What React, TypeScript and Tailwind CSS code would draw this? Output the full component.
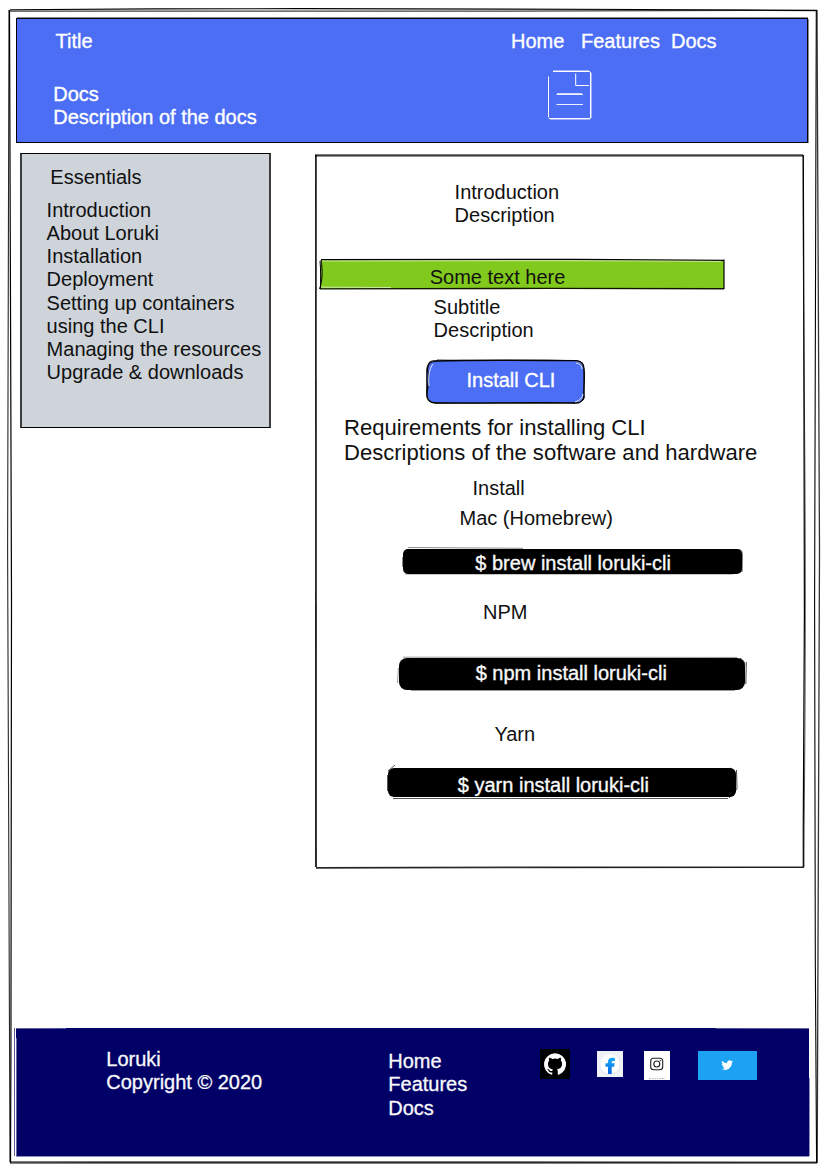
import type { ReactNode } from 'react'

type Stroke = { d: string; o?: number; w?: number; c?: string }

/* Hand-drawn outline laid over its panel; coordinates are local to the panel. */
function Sketch({ strokes }: { strokes: Stroke[] }) {
  return (
    <svg className="pointer-events-none absolute left-0 top-0 h-full w-full overflow-visible" fill="none">
      {strokes.map((s, i) => (
        <path key={i} d={s.d} stroke={s.c ?? '#000'} strokeWidth={s.w ?? 1} opacity={s.o ?? 1} />
      ))}
    </svg>
  )
}

function Command({ className, strokes, children }: { className: string; strokes: Stroke[]; children: ReactNode }) {
  return (
    <div className={`relative bg-black text-[#f8f9fa] [-webkit-text-stroke:0.35px_#f8f9fa] ${className}`}>
      <Sketch strokes={strokes} />
      <span className="relative block">{children}</span>
    </div>
  )
}

const essentials = [
  'Introduction',
  'About Loruki',
  'Installation',
  'Deployment',
  'Setting up containers',
  'using the CLI',
  'Managing the resources',
  'Upgrade & downloads',
]

export default function App() {
  return (
    <div className="relative flex h-[1172px] w-[827px] flex-col overflow-hidden whitespace-nowrap bg-white font-['Liberation_Sans',Arial,sans-serif] text-[20px] leading-[23px] text-[#111]">
      <Sketch
        strokes={[
          { d: 'M10 9.7C110 9 200 8.6 300 8.6S640 9.2 817 10.4', w: 1.1 },
          { d: 'M9 11.2C110 11.6 300 11.6 500 11.1S720 10.2 817 10.6', w: 1.2, o: 0.75 },
          { d: 'M816.3 10C815.5 120 814.7 300 814.6 600S815.3 950 816.6 1163', w: 1.1 },
          { d: 'M817 10C818.5 100 819.6 300 819.5 550S818 1000 817.2 1163', w: 1.3, o: 0.8 },
          { d: 'M10 1163C300 1162.4 600 1163.3 817 1162.8', w: 1.2 },
          { d: 'M10 1161.8C250 1162 500 1160.8 817 1162', w: 1.2, o: 0.7 },
          { d: 'M9 10C7.7 120 7.4 300 7.6 550S8.6 1000 10 1162', w: 1.1, o: 0.85 },
          { d: 'M9.5 10C10.8 120 11.6 300 11.5 600S11.2 1000 10.5 1163', w: 1.2 },
        ]}
      />

      <header className="relative ml-4 mt-[18px] flex h-[125px] w-[792px] border border-black bg-[#4c6ef5] text-white [-webkit-text-stroke:0.35px_#fff]">
        <Sketch
          strokes={[
            { d: 'M0 -1.5H791', o: 0.45 },
            { d: 'M791.5 0V124', o: 0.45 },
          ]}
        />
        <div className="w-[494px] pt-[11px]">
          <div className="pl-[38.5px]">Title</div>
          <div className="mt-[30px] pl-[36.3px]">
            <div>Docs</div>
            <div>Description of the docs</div>
          </div>
        </div>
        <div className="pt-[11px]">
          <nav className="flex">
            <a className="w-[70px]">Home</a>
            <a className="w-[90px]">Features</a>
            <a>Docs</a>
          </nav>
          <svg className="ml-[36px] mt-[16px]" width="46" height="52" fill="none" stroke="#fff">
            <path d="M6 2.5H43M1.5 7.5V48.5M2 49.5H43.5M43.5 3V49" />
            <path d="M6 1.5H42M3 50.5H43M44.5 4V49" opacity=".45" />
            <path d="M28.7 4.5V16.5H42" />
            <path d="M9.5 25.5H36M9.5 35.5H36M10 24.7H35" strokeWidth=".9" />
          </svg>
        </div>
      </header>

      <div className="mt-[10px] flex h-[875px] items-start">
        <aside className="h-[275px] w-[251px] ml-5 border-x-2 border-y border-x-[#3a3c3e] border-y-black bg-[#ced4da] pt-3">
          <h2 className="pl-[28.3px]">Essentials</h2>
          <ul className="mt-[10px] pl-[24.6px] leading-[23.15px]">
            {essentials.map((item) => (
              <li key={item}>{item}</li>
            ))}
          </ul>
        </aside>

        <main className="relative ml-11 mt-px h-[714px] w-[490px] pt-[27px]">
          <Sketch
            strokes={[
              { d: 'M0 .8C120 .3 300 .6 488 .8', w: 1.2, o: 0.7 },
              { d: 'M0 1.8C160 2 320 1.2 488 1.8', w: 1.2, o: 0.85 },
              { d: 'M.7 1C0 180 -.5 400 .6 713', w: 1.2, o: 0.75 },
              { d: 'M1 1C2.4 180 3 400 1.2 713', w: 1.2, o: 0.95 },
              { d: 'M488.3 1C488.5 150 490 280 489.4 460S488 650 488.3 713', w: 1.2 },
              { d: 'M488 1C488 150 490.3 280 490.3 440S489 650 489 713', w: 1, o: 0.65 },
              { d: 'M1 713.6C160 713.2 330 712.7 489 713.1', w: 1.2, o: 0.8 },
              { d: 'M1 714.3C160 713.2 330 713.9 489 713.5', w: 1.1, o: 0.7 },
            ]}
          />
          <div className="ml-[139.6px]">
            <h1>Introduction</h1>
            <p>Description</p>
          </div>
          <div className="relative ml-[6px] mt-[33px] h-[29px] w-[403px] bg-[#82c91e] pl-[108.7px] pt-[6px]">
            <Sketch
              strokes={[
                { d: 'M0 -.3C120 -1.2 270 -1 403 .3', w: 1.2 },
                { d: 'M403 -.5V29', w: 1.2 },
                { d: 'M-1 28.9C130 28.3 270 28.2 403 28.8', w: 1.4, o: 0.9 },
                { d: 'M0 0C1.7 10 1.7 20-1.5 29M-1 1C0 10-.5 20-.5 29', w: 1 },
                { d: 'M1 1C100 1 250 .2 400 1.4M0 27.2L70 27.5', c: '#fff', o: 0.6 },
              ]}
            />
            <span className="relative">Some text here</span>
          </div>
          <div className="ml-[118.6px] mt-[7px]">
            <h2>Subtitle</h2>
            <p>Description</p>
          </div>
          <button className="relative ml-[112px] mt-[19px] block h-[42px] w-[157px] rounded-[9px] bg-[#4c6ef5] pb-[11px] pl-[39.5px] pt-2 text-left text-white [-webkit-text-stroke:0.35px_#fff]">
            <Sketch
              strokes={[
                { d: 'M8 0C60-1.5 110-.5 149-.3Q157 0 157 8C158 18 156.5 27 157 34Q157 42 148 42C100 41 60 42.5 9 42Q0 42 0 33C1 24 2 16 .5 8Q1-1 8 0Z', w: 1.3 },
                { d: 'M10-1C60 0 105-1.2 147-.5Q155-1 157 8V34Q159 38 152 42C100 42.8 50 41.6 8 42Q-1 42-.5 32V9Q0 1 10 0Z', w: 1, o: 0.8 },
                { d: 'M2 25C1 17 2 8 6 3M149 2Q155 3 155 8M148 41Q155 39 156 33', c: '#fff', o: 0.8 },
              ]}
            />
            <span className="relative">Install CLI</span>
          </button>
          <div className="ml-[29px] mt-[12px] text-[22.07px] leading-[25px]">
            <h2>Requirements for installing CLI</h2>
            <p>Descriptions of the software and hardware</p>
          </div>
          <h2 className="ml-[157.5px] mt-[12px]">Install</h2>
          <h3 className="ml-[144.5px] mt-[7px]">Mac (Homebrew)</h3>
          <Command
            className="ml-[88px] mt-[19px] h-[25px] w-[339px] rounded-[5px] pl-[72.3px] pt-[3px]"
            strokes={[
              { d: 'M5-1.5L120-.7M-.5 8V18M2 25H330', w: 0.9, o: 0.5 },
              { d: 'M336.5 0Q339.8 2 339.3 6L339 23', w: 1, o: 0.7 },
            ]}
          >
            $ brew install loruki-cli
          </Command>
          <h3 className="ml-[168px] mt-[27px]">NPM</h3>
          <Command
            className="ml-[84px] mt-[34px] h-[32px] w-[346px] rounded-[8px] pl-[76.7px] pt-[4px]"
            strokes={[
              { d: 'M4-.8L338-.6M-.6 10L-1.5 25M12 32.5H336', w: 0.8, o: 0.5 },
              { d: 'M341 0Q346 3 346 7M347.3 4L346.8 26', w: 0.9, o: 0.8 },
            ]}
          >
            $ npm install loruki-cli
          </Command>
          <h3 className="ml-[179.4px] mt-[33px]">Yarn</h3>
          <Command
            className="ml-[73px] mt-[22px] h-[29px] w-[348px] rounded-[6px] pl-[69.8px] pt-[6px]"
            strokes={[
              { d: 'M0 3L7-3M-.5 7V23M5 30.5L340 30.5', w: 0.9, o: 0.75 },
              { d: 'M342 0Q347 2 347 5M348.5 2L349 21L341 30', w: 0.9, o: 0.8 },
            ]}
          >
            $ yarn install loruki-cli
          </Command>
        </main>
      </div>

      <footer className="relative ml-4 flex h-32 w-[793px] items-start bg-[#000066] text-[#f8f9fa] [-webkit-text-stroke:0.3px_#f8f9fa]">
        <Sketch
          strokes={[
            { d: 'M-1.5 0V128', c: '#000066', o: 0.65 },
            { d: 'M.5 10V128M0 .5L50 .3M700 .3L793 .5', c: '#fff', o: 0.4 },
            { d: 'M0 128.3H793M793.3 50V128', c: '#000066', o: 0.55 },
          ]}
        />
        <div className="ml-[90.3px] mt-5 w-[282px]">
          <div>Loruki</div>
          <div>Copyright © 2020</div>
        </div>
        <nav className="mt-[22px] flex w-[151.7px] flex-col leading-[23.3px]">
          <a>Home</a>
          <a>Features</a>
          <a>Docs</a>
        </nav>
        <svg className="mt-[21px] bg-black" width="30" height="30" viewBox="0 0 30 30">
          <path
            transform="translate(4 4) scale(.92)"
            fill="#fff"
            d="M12 .3a12 12 0 0 0-3.8 23.4c.6.1.8-.3.8-.6v-2c-3.3.7-4-1.6-4-1.6-.6-1.4-1.4-1.8-1.4-1.8-1-.7.1-.7.1-.7 1.2 0 1.9 1.2 1.9 1.2 1 1.8 2.8 1.3 3.5 1 0-.8.4-1.3.7-1.6-2.7-.3-5.5-1.3-5.5-6 0-1.2.5-2.3 1.3-3.1-.2-.4-.6-1.6 0-3.2 0 0 1-.3 3.4 1.2a11.5 11.5 0 0 1 6 0c2.3-1.5 3.3-1.2 3.3-1.2.6 1.6.2 2.8 0 3.2.9.8 1.3 1.9 1.3 3.2 0 4.6-2.8 5.6-5.5 5.9.5.4.9 1 .9 2.2v3.3c0 .3.1.7.8.6A12 12 0 0 0 12 .3"
          />
        </svg>
        <svg className="ml-[27px] mt-[23px] bg-[#eff1f8]" width="26" height="26" viewBox="0 0 26 26">
          <defs>
            <linearGradient id="fb" x1="0" y1="0" x2="0" y2="1">
              <stop stopColor="#18acfe" />
              <stop offset="1" stopColor="#0867df" />
            </linearGradient>
          </defs>
          <circle cx="13" cy="13.5" r="10.2" fill="#e1e5ed" />
          <circle cx="13" cy="13" r="9.8" fill="#fff" />
          <path d="M11 23v-7.2H8.5v-3.6H11V11c0-3.1 1.5-4.3 4.2-4.3.9 0 1.9.1 2.7.3v3h-1.6c-1.2 0-1.6.5-1.6 1.6v.6h3l-.6 3.6h-2.4V23Z" fill="url(#fb)" />
        </svg>
        <svg className="ml-[21px] mt-[23px] bg-white" width="26" height="29" viewBox="0 0 26 29" fill="none" stroke="#222">
          <rect x="6.7" y="7.2" width="12" height="11.5" rx="3" strokeWidth="1.1" />
          <circle cx="12.8" cy="13" r="3" strokeWidth="1.1" />
          <circle cx="16.3" cy="9.6" r=".7" fill="#222" stroke="none" />
          <path d="M5 27.7H14M15 27.5H21" stroke="#aaa" strokeDasharray="2 .7" strokeWidth=".8" />
        </svg>
        <svg className="ml-[28px] mt-[23px] bg-[#1da1f2]" width="59" height="29" viewBox="0 0 59 29">
          <path
            transform="translate(23.3 8.3) scale(.49)"
            fill="#fff"
            d="M23.95 4.57a10 10 0 0 1-2.82.77 4.96 4.96 0 0 0 2.16-2.72c-.95.55-2 .95-3.13 1.18a4.92 4.92 0 0 0-8.38 4.48C7.69 8.1 4.07 6.13 1.64 3.16a4.93 4.93 0 0 0 1.52 6.57 4.9 4.9 0 0 1-2.23-.61v.06c0 2.38 1.7 4.37 3.95 4.82a5 5 0 0 1-2.21.09 4.94 4.94 0 0 0 4.6 3.42A9.87 9.87 0 0 1 0 19.54a13.99 13.99 0 0 0 7.55 2.21c9.05 0 14-7.5 14-13.98 0-.21 0-.42-.02-.63a9.94 9.94 0 0 0 2.42-2.57"
          />
        </svg>
      </footer>
    </div>
  )
}
